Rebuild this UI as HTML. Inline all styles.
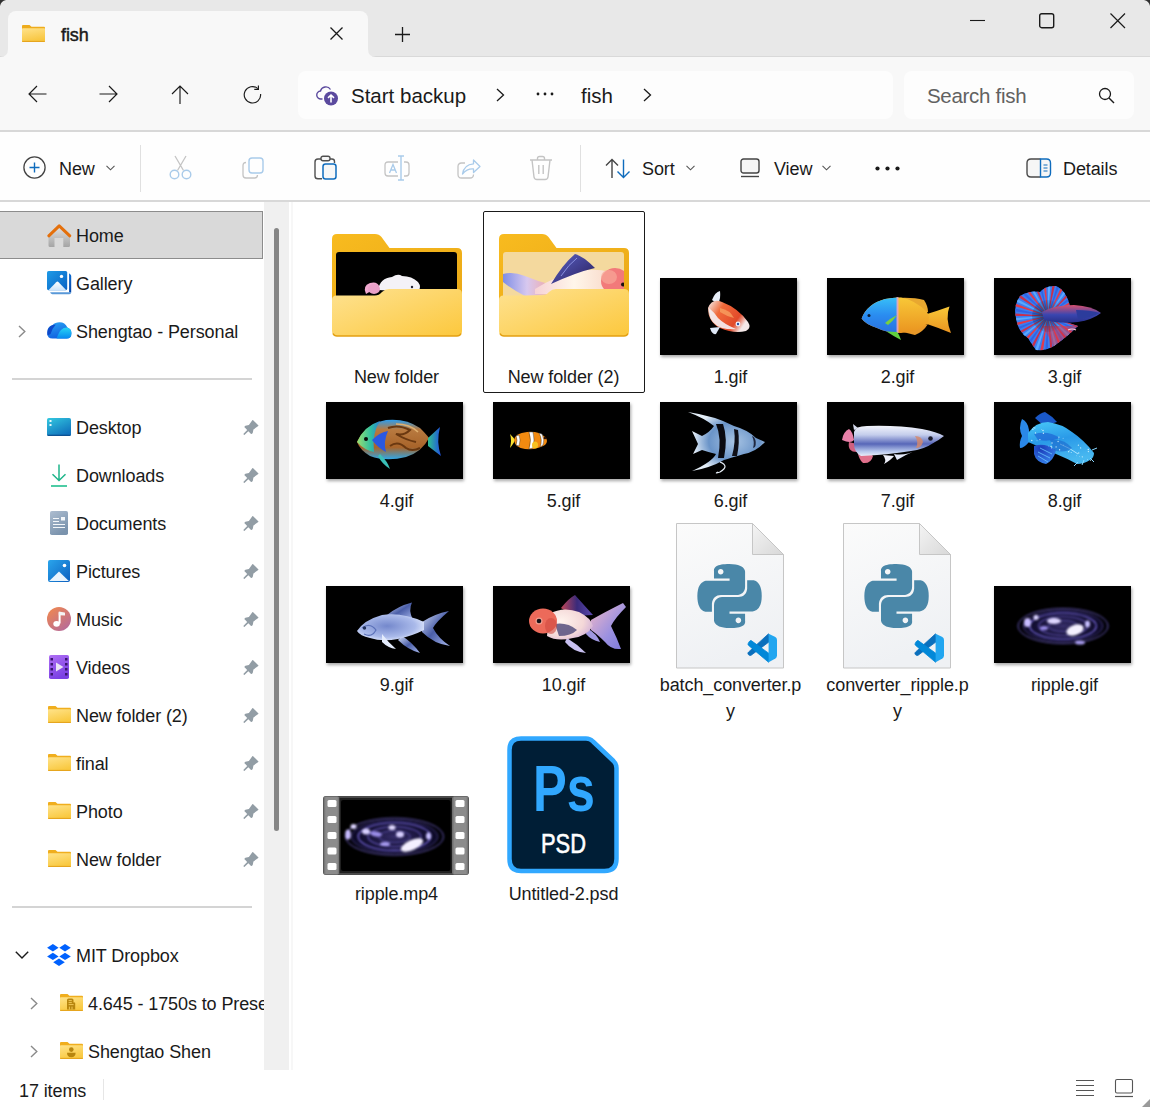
<!DOCTYPE html>
<html><head><meta charset="utf-8">
<style>
*{margin:0;padding:0;box-sizing:border-box}
html,body{width:1150px;height:1107px;overflow:hidden;background:#fff;font-family:"Liberation Sans",sans-serif;color:#1a1a1a}
.a{position:absolute}
.t{position:absolute;font-size:18px;letter-spacing:-0.1px;white-space:nowrap;line-height:22px;padding-top:1px}
svg{position:absolute;overflow:visible}
.lbl{position:absolute;font-size:18px;letter-spacing:-0.1px;white-space:nowrap;line-height:26px;text-align:center;width:160px;padding-top:1px}
</style></head><body>

<!-- title bar -->
<div class="a" style="left:0;top:0;width:1150px;height:57px;background:#e8e8e8"></div>
<div class="a" style="left:0;top:56px;width:1150px;height:1px;background:#d9d9d9"></div>
<!-- tab -->
<div class="a" style="left:8px;top:11px;width:360px;height:47px;background:#f8f8f8;border-radius:8px 8px 0 0"></div>
<svg style="left:0;top:49px" width="8" height="8"><path d="M0 8 Q8 8 8 0 L8 8Z" fill="#f8f8f8"/></svg>
<svg style="left:368px;top:49px" width="8" height="8"><path d="M8 8 Q0 8 0 0 L0 8Z" fill="#f8f8f8"/></svg>
<!-- window corners -->
<svg style="left:0;top:0" width="8" height="8"><path d="M0 0 H6 Q1 1 0 6Z" fill="#303030"/></svg>
<svg style="left:1142px;top:0" width="8" height="8"><path d="M8 0 H2 Q7 1 8 6Z" fill="#303030"/></svg>

<!-- tab folder icon -->
<svg style="left:22px;top:25px" width="23" height="17" viewBox="0 0 23 17"><defs><linearGradient id="tfg" x1="0" y1="0" x2="0.3" y2="1"><stop offset="0" stop-color="#ffe28a"/><stop offset="1" stop-color="#f8c640"/></linearGradient></defs><path d="M0 1 Q0 0 1 0 H7.5 L9.5 1.8 H22 Q23 1.8 23 2.8 V16 Q23 17 22 17 H1 Q0 17 0 16Z" fill="#eeac1c"/><path d="M0 4 Q0 3.3 0.8 3.3 H22.2 Q23 3.3 23 4 V16 Q23 17 22 17 H1 Q0 17 0 16Z" fill="url(#tfg)"/><path d="M0.3 16.4 H22.7" stroke="#e4a11a" stroke-width="1"/></svg>
<div class="t" style="left:61px;top:23px;font-size:18px;-webkit-text-stroke:0.45px #1a1a1a">fish</div>
<!-- tab close -->
<svg style="left:330px;top:27px" width="13" height="13"><path d="M0.5 0.5 L12.5 12.5 M12.5 0.5 L0.5 12.5" stroke="#1a1a1a" stroke-width="1.3"/></svg>
<!-- new tab plus -->
<svg style="left:395px;top:27px" width="15" height="15"><path d="M7.5 0 V15 M0 7.5 H15" stroke="#1a1a1a" stroke-width="1.3"/></svg>
<!-- window controls -->
<svg style="left:970px;top:19px" width="16" height="3"><path d="M0 1.5 H15" stroke="#1a1a1a" stroke-width="1.1"/></svg>
<svg style="left:1039px;top:13px" width="16" height="16"><rect x="0.7" y="0.7" width="14" height="14" rx="2" fill="none" stroke="#1a1a1a" stroke-width="1.4"/></svg>
<svg style="left:1110px;top:13px" width="16" height="16"><path d="M0.5 0.5 L15 15 M15 0.5 L0.5 15" stroke="#1a1a1a" stroke-width="1.2"/></svg>

<!-- nav bar -->
<div class="a" style="left:0;top:57px;width:1150px;height:73px;background:#f8f8f8"></div>
<div class="a" style="left:0;top:130px;width:1150px;height:2px;background:#d8d8d8"></div>
<!-- nav arrows -->
<svg style="left:28px;top:85px" width="19" height="18" viewBox="0 0 19 18"><path d="M18.5 9 H1 M9 1 L1 9 L9 17" fill="none" stroke="#1a1a1a" stroke-width="1.15"/></svg>
<svg style="left:99px;top:85px" width="19" height="18" viewBox="0 0 19 18"><path d="M0.5 9 H18 M10 1 L18 9 L10 17" fill="none" stroke="#1a1a1a" stroke-width="1.15"/></svg>
<svg style="left:171px;top:85px" width="18" height="19" viewBox="0 0 18 19"><path d="M9 19 V1 M1 9 L9 1 L17 9" fill="none" stroke="#1a1a1a" stroke-width="1.15"/></svg>
<svg style="left:243px;top:85px" width="20" height="20" viewBox="0 0 20 20"><path d="M17.6 9 A8.2 8.2 0 1 1 14.8 3.6" fill="none" stroke="#1a1a1a" stroke-width="1.15"/><path d="M15.4 0.5 V4.4 H11.3" fill="none" stroke="#1a1a1a" stroke-width="1.15"/></svg>

<!-- address box -->
<div class="a" style="left:298px;top:71px;width:595px;height:48px;background:#fdfdfd;border-radius:8px"></div>
<svg style="left:316px;top:85px" width="24" height="22" viewBox="0 0 24 22"><path d="M6.5 14 H5 A4 4 0 0 1 4.5 6 A5.5 5.5 0 0 1 14.5 4.5" fill="none" stroke="#5b4a9e" stroke-width="1.4"/><circle cx="15" cy="13.5" r="7" fill="#5b4a9e"/><path d="M15 17.5 V10 M12 12.8 L15 10 L18 12.8" fill="none" stroke="#fff" stroke-width="1.6"/></svg>
<div class="t" style="left:351px;top:84px;font-size:20.5px;letter-spacing:0">Start backup</div>
<svg style="left:496px;top:88px" width="9" height="14" viewBox="0 0 9 14"><path d="M1 1 L7.5 7 L1 13" fill="none" stroke="#1a1a1a" stroke-width="1.3"/></svg>
<svg style="left:536px;top:92px" width="18" height="4"><circle cx="2" cy="2" r="1.4" fill="#1a1a1a"/><circle cx="9" cy="2" r="1.4" fill="#1a1a1a"/><circle cx="16" cy="2" r="1.4" fill="#1a1a1a"/></svg>
<div class="t" style="left:581px;top:84px;font-size:20.5px;letter-spacing:0">fish</div>
<svg style="left:643px;top:88px" width="9" height="14" viewBox="0 0 9 14"><path d="M1 1 L7.5 7 L1 13" fill="none" stroke="#1a1a1a" stroke-width="1.3"/></svg>

<!-- search box -->
<div class="a" style="left:904px;top:71px;width:230px;height:48px;background:#fdfdfd;border-radius:8px"></div>
<div class="t" style="left:927px;top:84px;font-size:20.5px;letter-spacing:-0.3px;color:#616161">Search fish</div>
<svg style="left:1098px;top:87px" width="17" height="17" viewBox="0 0 17 17"><circle cx="7" cy="7" r="5.5" fill="none" stroke="#1a1a1a" stroke-width="1.3"/><path d="M11 11 L16 16" stroke="#1a1a1a" stroke-width="1.4"/></svg>

<!-- command bar -->
<div class="a" style="left:0;top:132px;width:1150px;height:68px;background:#fefefe"></div>
<div class="a" style="left:0;top:200px;width:1150px;height:2px;background:#d8d8d8"></div>


<!-- New button -->
<svg style="left:23px;top:156px" width="23" height="23" viewBox="0 0 23 23"><circle cx="11.5" cy="11.5" r="10.6" fill="none" stroke="#444" stroke-width="1.3"/><path d="M11.5 6.5 V16.5 M6.5 11.5 H16.5" stroke="#0f6cbd" stroke-width="1.4"/></svg>
<div class="t" style="left:59px;top:157px">New</div>
<svg style="left:106px;top:165px" width="9" height="6" viewBox="0 0 9 6"><path d="M0.5 0.8 L4.5 4.8 L8.5 0.8" fill="none" stroke="#555" stroke-width="1.1"/></svg>
<div class="a" style="left:140px;top:145px;width:1px;height:47px;background:#e0e0e0"></div>
<!-- cut -->
<svg style="left:169px;top:155px" width="23" height="25" viewBox="0 0 23 25"><path d="M6 1 L14.5 15.5 M17 1 L8.5 15.5" stroke="#c4c4c4" stroke-width="1.3" fill="none"/><circle cx="5.5" cy="19.5" r="4.3" fill="none" stroke="#a9cbea" stroke-width="1.4"/><circle cx="17.5" cy="19.5" r="4.3" fill="none" stroke="#a9cbea" stroke-width="1.4"/></svg>
<!-- copy -->
<svg style="left:242px;top:157px" width="22" height="22" viewBox="0 0 22 22"><path d="M4 5.5 Q1 5.5 1 8.5 V18 Q1 21 4 21 H12.5 Q15.5 21 15.5 18" fill="none" stroke="#c4c4c4" stroke-width="1.3"/><rect x="7" y="1" width="14" height="15" rx="3" fill="none" stroke="#a9cbea" stroke-width="1.4"/></svg>
<!-- paste -->
<svg style="left:313px;top:155px" width="24" height="26" viewBox="0 0 24 26"><path d="M9 4 H5 Q2 4 2 7 V21 Q2 23.8 5 23.8 H9" fill="none" stroke="#505050" stroke-width="1.4"/><path d="M16 4 H19 Q21.5 4 21.5 6.5 V8" fill="none" stroke="#505050" stroke-width="1.4"/><rect x="8" y="1.2" width="9" height="4.5" rx="2" fill="#f6f6f6" stroke="#505050" stroke-width="1.4"/><rect x="10" y="9" width="13" height="15" rx="2.5" fill="#f7f7f7" stroke="#0f6cbd" stroke-width="1.5"/></svg>
<!-- rename -->
<svg style="left:384px;top:155px" width="26" height="26" viewBox="0 0 26 26"><path d="M14 7 H4 Q1 7 1 10 V18 Q1 21 4 21 H14 M20 7 H22 Q25 7 25 10 V18 Q25 21 22 21 H20" fill="none" stroke="#c4c4c4" stroke-width="1.3"/><path d="M5.5 18 L9 9.5 L12.5 18 M6.8 15 H11.2" fill="none" stroke="#a9cbea" stroke-width="1.3"/><path d="M17 1 V25 M14 1 H20 M14 25 H20" fill="none" stroke="#a9cbea" stroke-width="1.4"/></svg>
<!-- share -->
<svg style="left:457px;top:159px" width="24" height="20" viewBox="0 0 24 20"><path d="M8 4 H4.5 Q1 4 1 7.5 V15.5 Q1 19 4.5 19 H13 Q16.5 19 16.5 15.5" fill="none" stroke="#c4c4c4" stroke-width="1.3"/><path d="M16.5 1 L23 7.5 L16.5 13.5 V10 Q10 9.5 5.5 15 Q7 5.5 16.5 4.8Z" fill="none" stroke="#a9cbea" stroke-width="1.3" stroke-linejoin="round"/></svg>
<!-- delete -->
<svg style="left:529px;top:155px" width="24" height="26" viewBox="0 0 24 26"><path d="M1 5 H23 M8.5 5 V3.5 Q8.5 1.5 10.5 1.5 H13.5 Q15.5 1.5 15.5 3.5 V5 M3 5 L5 22 Q5.3 24.5 8 24.5 H16 Q18.7 24.5 19 22 L21 5 M9.8 10 V19 M14.2 10 V19" fill="none" stroke="#c4c4c4" stroke-width="1.4"/></svg>
<div class="a" style="left:580px;top:145px;width:1px;height:47px;background:#e0e0e0"></div>
<!-- sort -->
<svg style="left:605px;top:158px" width="26" height="21" viewBox="0 0 26 21"><path d="M7 20 V1.5 M1 7.5 L7 1.5 L13 7.5" fill="none" stroke="#444" stroke-width="1.4"/><path d="M18.5 1.5 V19.5 M12.5 13.5 L18.5 19.5 L24.5 13.5" fill="none" stroke="#0f6cbd" stroke-width="1.4"/></svg>
<div class="t" style="left:642px;top:157px">Sort</div>
<svg style="left:686px;top:165px" width="9" height="6" viewBox="0 0 9 6"><path d="M0.5 0.8 L4.5 4.8 L8.5 0.8" fill="none" stroke="#555" stroke-width="1.1"/></svg>
<!-- view -->
<svg style="left:740px;top:158px" width="20" height="20" viewBox="0 0 20 20"><rect x="1" y="1" width="18" height="14" rx="2.5" fill="#f6f6f6" stroke="#444" stroke-width="1.4"/><path d="M1 18.5 H19" stroke="#444" stroke-width="1.4"/></svg>
<div class="t" style="left:774px;top:157px">View</div>
<svg style="left:822px;top:165px" width="9" height="6" viewBox="0 0 9 6"><path d="M0.5 0.8 L4.5 4.8 L8.5 0.8" fill="none" stroke="#555" stroke-width="1.1"/></svg>
<svg style="left:875px;top:166px" width="25" height="5"><circle cx="2.5" cy="2.5" r="2.1" fill="#1a1a1a"/><circle cx="12.5" cy="2.5" r="2.1" fill="#1a1a1a"/><circle cx="22.5" cy="2.5" r="2.1" fill="#1a1a1a"/></svg>
<!-- details -->
<svg style="left:1026px;top:158px" width="26" height="20" viewBox="0 0 26 20"><path d="M14.5 1 H5 Q1 1 1 5 V15 Q1 19 5 19 H14.5" fill="#f6f6f6" stroke="#4a4a4a" stroke-width="1.4"/><path d="M14.5 1 H20.5 Q24.5 1 24.5 5 V15 Q24.5 19 20.5 19 H14.5Z" fill="#f6f6f6" stroke="#0f6cbd" stroke-width="1.4"/><path d="M17.5 7 H21.5 M17.5 10 H21.5 M17.5 13 H21.5" stroke="#0f6cbd" stroke-width="1.2"/></svg>
<div class="t" style="left:1063px;top:157px">Details</div>

<!-- content -->
<div class="a" style="left:483px;top:211px;width:162px;height:182px;border:1px solid #1a1a1a;border-radius:2px"></div>
<svg style="left:332px;top:234px" width="130" height="103" viewBox="0 0 130 103"><defs><linearGradient id="fb1" x1="0" y1="0" x2="1" y2="1"><stop offset="0" stop-color="#f8bb1f"/><stop offset="1" stop-color="#eaa816"/></linearGradient><linearGradient id="ff1" x1="0" y1="0" x2="1" y2="1"><stop offset="0" stop-color="#fee291"/><stop offset="1" stop-color="#fcc83d"/></linearGradient><clipPath id="fc1"><rect x="4" y="18" width="121" height="60" rx="3"/></clipPath></defs>
<path d="M0 5 Q0 0 5 0 H43 Q47 0 49.5 3 L57.5 14 H125 Q130 14 130 19 V70 H0Z" fill="url(#fb1)"/>
<g clip-path="url(#fc1)"><rect x="0" y="0" width="130" height="103" fill="#000"/><g transform="translate(0,0)"><path d="M34 60 Q30 52 38 49 Q45 47 47 52 Z" fill="#f0a8cf"/><path d="M46 56 Q48 44 60 43 Q66 39 70 42 Q80 42 86 48 Q90 53 86 58 Z" fill="#f4f2f7"/><ellipse cx="42" cy="55" rx="6" ry="5" fill="#e9a0c8"/><circle cx="80" cy="53" r="1.2" fill="#223"/></g></g>
<path d="M0 66 Q0 61.5 4.5 61.5 H43 Q47 61.5 50 58 Q53 55 57 55 H125 Q130 55 130 60 V97 Q130 102 125 102 H5 Q0 102 0 97Z" fill="url(#ff1)"/>
<path d="M1 99.5 Q2 102 5 102 H125 Q128 102 129 99.5" fill="none" stroke="#e3a012" stroke-width="1.5"/></svg>
<svg style="left:499px;top:234px" width="130" height="103" viewBox="0 0 130 103"><defs><linearGradient id="fb2" x1="0" y1="0" x2="1" y2="1"><stop offset="0" stop-color="#f8bb1f"/><stop offset="1" stop-color="#eaa816"/></linearGradient><linearGradient id="ff2" x1="0" y1="0" x2="1" y2="1"><stop offset="0" stop-color="#fee291"/><stop offset="1" stop-color="#fcc83d"/></linearGradient><clipPath id="fc2"><rect x="4" y="18" width="121" height="60" rx="3"/></clipPath></defs>
<path d="M0 5 Q0 0 5 0 H43 Q47 0 49.5 3 L57.5 14 H125 Q130 14 130 19 V70 H0Z" fill="url(#fb2)"/>
<g clip-path="url(#fc2)"><rect x="0" y="0" width="130" height="103" fill="#f4d99e"/><defs><linearGradient id="tl2" x1="0" y1="0" x2="1" y2="0"><stop offset="0" stop-color="#7f8ee6"/><stop offset="0.5" stop-color="#d7c8ef"/><stop offset="1" stop-color="#f1a8a8"/></linearGradient><linearGradient id="bd2" x1="0" y1="0" x2="1" y2="0"><stop offset="0" stop-color="#f6d2d6"/><stop offset="0.5" stop-color="#fff6ea"/><stop offset="1" stop-color="#f8d8c8"/></linearGradient><linearGradient id="df2" x1="0" y1="0" x2="1" y2="1"><stop offset="0" stop-color="#5a62c8"/><stop offset="1" stop-color="#2a1f5a"/></linearGradient></defs>
<path d="M4 40 Q14 37 26 42 Q38 47 50 50 L52 60 L26 62 Q14 56 4 48Z" fill="url(#tl2)"/>
<path d="M36 55 Q56 42 80 37 Q98 34 110 38 L114 60 L36 60Z" fill="url(#bd2)"/>
<path d="M52 50 Q64 30 76 20 Q84 22 96 34 Q78 38 52 50Z" fill="url(#df2)"/>
<path d="M62 42 Q70 30 78 24" stroke="#8a90e0" stroke-width="1" fill="none"/>
<ellipse cx="116" cy="47" rx="14" ry="13" fill="#f27a7a"/><ellipse cx="110" cy="43" rx="8" ry="7" fill="#f8a898" opacity="0.7"/>
<circle cx="124" cy="50.5" r="2" fill="#1a1010"/></g>
<path d="M0 66 Q0 61.5 4.5 61.5 H43 Q47 61.5 50 58 Q53 55 57 55 H125 Q130 55 130 60 V97 Q130 102 125 102 H5 Q0 102 0 97Z" fill="url(#ff2)"/>
<path d="M1 99.5 Q2 102 5 102 H125 Q128 102 129 99.5" fill="none" stroke="#e3a012" stroke-width="1.5"/></svg>
<div class="lbl" style="left:316.5px;top:363px">New folder</div>
<div class="lbl" style="left:483.5px;top:363px">New folder (2)</div>
<div class="a" style="left:660px;top:278px;width:137px;height:77px;background:#000;box-shadow:1px 2px 3px rgba(0,0,0,0.35)"><svg style="left:0;top:0" width="137" height="77" viewBox="0 0 137 77"><defs><linearGradient id="k1" x1="0" y1="0" x2="1" y2="0.5"><stop offset="0" stop-color="#f4f0f0"/><stop offset="0.35" stop-color="#f06a3a"/><stop offset="0.8" stop-color="#e24a2a"/><stop offset="1" stop-color="#f5e8e8"/></linearGradient></defs>
<path d="M52 22 Q55 14 60 13 Q61 20 58 26Z" fill="#e8eef8"/>
<path d="M48 30 Q52 20 62 24 Q78 30 88 44 Q92 50 86 53 Q74 56 60 50 Q48 44 48 30Z" fill="url(#k1)"/>
<path d="M50 50 L60 49 L56 56 Q52 57 50 50Z" fill="#dfe8f6"/><path d="M49 34 Q50 46 62 50 Q70 52 76 51 Q64 46 58 40 Q54 34 49 30Z" fill="#f4f0f4" opacity="0.9"/><path d="M60 30 Q70 32 74 40 Q66 38 60 34Z" fill="#f8a060" opacity="0.8"/>
<circle cx="78" cy="46" r="2.4" fill="#f0f4ff"/><circle cx="78" cy="46" r="1.2" fill="#3050a0"/></svg></div>
<div class="a" style="left:827px;top:278px;width:137px;height:77px;background:#000;box-shadow:1px 2px 3px rgba(0,0,0,0.35)"><svg style="left:0;top:0" width="137" height="77" viewBox="0 0 137 77"><defs><linearGradient id="g2b" x1="0" y1="0" x2="0" y2="1"><stop offset="0" stop-color="#38c0f8"/><stop offset="0.5" stop-color="#2a8cf0"/><stop offset="1" stop-color="#2a70e0"/></linearGradient><linearGradient id="g2y" x1="0" y1="0" x2="0" y2="1"><stop offset="0" stop-color="#f8c838"/><stop offset="1" stop-color="#ea9420"/></linearGradient><clipPath id="c2b"><rect x="0" y="0" width="70.5" height="77"/></clipPath></defs>
<path d="M70 20 Q86 19 97 22 Q101 28 101 34 L88 36Z" fill="#e8a830"/>
<path d="M100 36 Q110 33 122.5 28.5 Q118 40 124 55 Q112 50 100 46Z" fill="url(#g2y)"/>
<path d="M76 48 Q90 50 101 46 Q96 54 88 57 L76 54Z" fill="#e89828"/>
<path d="M34.6 40.5 Q40 26 58 21 Q68 19 74 19.5 Q88 22 100 34 Q104 40 100 46 Q90 54 74 55 Q60 55 50 50 Q38 46 34.6 40.5Z" fill="url(#g2y)"/>
<path d="M34.6 40.5 Q40 26 58 21 Q68 19 74 19.5 Q88 22 100 34 Q104 40 100 46 Q90 54 74 55 Q60 55 50 50 Q38 46 34.6 40.5Z" fill="url(#g2b)" clip-path="url(#c2b)"/>
<rect x="69.5" y="19" width="2" height="36" fill="#f0a8c8" opacity="0.8"/>
<path d="M58 45 Q64 40 70 37 Q66 43 61 47Z" fill="#7ad040"/>
<path d="M59.5 53.6 Q66 58 74 62 Q72 56 70 54Z" fill="#60d040"/>
<circle cx="42" cy="37.5" r="1.5" fill="#0a1a30"/></svg></div>
<div class="a" style="left:994px;top:278px;width:137px;height:77px;background:#000;box-shadow:1px 2px 3px rgba(0,0,0,0.35)"><svg style="left:0;top:0" width="137" height="77" viewBox="0 0 137 77"><defs><clipPath id="bf"><path d="M76 28 Q72 12 62 8 Q52 7 46 14 Q36 12 26 18 Q19 28 22 40 Q24 54 34 60 Q39 68 42 72 Q52 73 60 68 Q74 58 84 48 L60 40Z"/></clipPath><linearGradient id="bb3" x1="0" y1="0" x2="0" y2="1"><stop offset="0" stop-color="#d8506e"/><stop offset="0.55" stop-color="#3a46b0"/><stop offset="1" stop-color="#28308a"/></linearGradient><radialGradient id="bt3" cx="0.4" cy="0.5" r="0.6"><stop offset="0" stop-color="#000" stop-opacity="0.5"/><stop offset="1" stop-color="#000" stop-opacity="0"/></radialGradient></defs><g clip-path="url(#bf)"><rect x="0" y="0" width="137" height="77" fill="#3c7ef0"/><path d="M54 38 L114.0 38.0 L113.8 42.7Z" fill="#e23a4c"/><path d="M54 38 L113.4 46.5 L112.5 51.2Z" fill="#5aa8ff"/><path d="M54 38 L111.6 54.9 L110.1 59.4Z" fill="#c8304e"/><path d="M54 38 L108.6 62.9 L106.5 67.1Z" fill="#3064e6"/><path d="M54 38 L104.5 70.4 L101.8 74.3Z" fill="#e23a4c"/><path d="M54 38 L99.3 77.3 L96.1 80.7Z" fill="#5aa8ff"/><path d="M54 38 L93.3 83.3 L89.6 86.3Z" fill="#c8304e"/><path d="M54 38 L86.4 88.5 L82.4 90.9Z" fill="#3064e6"/><path d="M54 38 L78.9 92.6 L74.6 94.4Z" fill="#e23a4c"/><path d="M54 38 L70.9 95.6 L66.3 96.7Z" fill="#5aa8ff"/><path d="M54 38 L62.5 97.4 L57.9 97.9Z" fill="#c8304e"/><path d="M54 38 L54.0 98.0 L49.3 97.8Z" fill="#3064e6"/><path d="M54 38 L45.5 97.4 L40.8 96.5Z" fill="#e23a4c"/><path d="M54 38 L37.1 95.6 L32.6 94.1Z" fill="#5aa8ff"/><path d="M54 38 L29.1 92.6 L24.9 90.5Z" fill="#c8304e"/><path d="M54 38 L21.6 88.5 L17.7 85.8Z" fill="#3064e6"/><path d="M54 38 L14.7 83.3 L11.3 80.1Z" fill="#e23a4c"/><path d="M54 38 L8.7 77.3 L5.7 73.6Z" fill="#5aa8ff"/><path d="M54 38 L3.5 70.4 L1.1 66.4Z" fill="#c8304e"/><path d="M54 38 L-0.6 62.9 L-2.4 58.6Z" fill="#3064e6"/><path d="M54 38 L-3.6 54.9 L-4.7 50.3Z" fill="#e23a4c"/><path d="M54 38 L-5.4 46.5 L-5.9 41.9Z" fill="#5aa8ff"/><path d="M54 38 L-6.0 38.0 L-5.8 33.3Z" fill="#c8304e"/><path d="M54 38 L-5.4 29.5 L-4.5 24.8Z" fill="#3064e6"/><path d="M54 38 L-3.6 21.1 L-2.1 16.6Z" fill="#e23a4c"/><path d="M54 38 L-0.6 13.1 L1.5 8.9Z" fill="#5aa8ff"/><path d="M54 38 L3.5 5.6 L6.2 1.7Z" fill="#c8304e"/><path d="M54 38 L8.7 -1.3 L11.9 -4.7Z" fill="#3064e6"/><path d="M54 38 L14.7 -7.3 L18.4 -10.3Z" fill="#e23a4c"/><path d="M54 38 L21.6 -12.5 L25.6 -14.9Z" fill="#5aa8ff"/><path d="M54 38 L29.1 -16.6 L33.4 -18.4Z" fill="#c8304e"/><path d="M54 38 L37.1 -19.6 L41.7 -20.7Z" fill="#3064e6"/><path d="M54 38 L45.5 -21.4 L50.1 -21.9Z" fill="#e23a4c"/><path d="M54 38 L54.0 -22.0 L58.7 -21.8Z" fill="#5aa8ff"/><path d="M54 38 L62.5 -21.4 L67.2 -20.5Z" fill="#c8304e"/><path d="M54 38 L70.9 -19.6 L75.4 -18.1Z" fill="#3064e6"/><path d="M54 38 L78.9 -16.6 L83.1 -14.5Z" fill="#e23a4c"/><path d="M54 38 L86.4 -12.5 L90.3 -9.8Z" fill="#5aa8ff"/><path d="M54 38 L93.3 -7.3 L96.7 -4.1Z" fill="#c8304e"/><path d="M54 38 L99.3 -1.3 L102.3 2.4Z" fill="#3064e6"/><path d="M54 38 L104.5 5.6 L106.9 9.6Z" fill="#e23a4c"/><path d="M54 38 L108.6 13.1 L110.4 17.4Z" fill="#5aa8ff"/><path d="M54 38 L111.6 21.1 L112.7 25.7Z" fill="#c8304e"/><path d="M54 38 L113.4 29.5 L113.9 34.1Z" fill="#3064e6"/><path d="M48 48 Q56 60 60 70 Q72 60 84 48Z" fill="#d8344a" opacity="0.55"/><circle cx="54" cy="38" r="16" fill="url(#bt3)"/></g><path d="M48 34 Q60 27 80 27 Q98 28 107 35 Q98 42 84 44 Q66 46 50 42Z" fill="url(#bb3)"/><path d="M82 32 Q96 32 106 35 Q96 40 84 41Z" fill="#2c3c9c"/><path d="M74 52 Q78 50 82 52" stroke="#ffd0d8" stroke-width="1.2" fill="none"/></svg></div>
<div class="a" style="left:326px;top:402px;width:137px;height:77px;background:#000;box-shadow:1px 2px 3px rgba(0,0,0,0.35)"><svg style="left:0;top:0" width="137" height="77" viewBox="0 0 137 77"><defs><linearGradient id="g4b" x1="0" y1="0" x2="0" y2="1"><stop offset="0" stop-color="#2a9ef0"/><stop offset="0.25" stop-color="#b87a40"/><stop offset="0.7" stop-color="#a8642a"/><stop offset="1" stop-color="#30a8e8"/></linearGradient><linearGradient id="g4f" x1="0" y1="0" x2="1" y2="0"><stop offset="0" stop-color="#9ae070"/><stop offset="0.6" stop-color="#30c0a0"/><stop offset="1" stop-color="#2a80d8"/></linearGradient><linearGradient id="g4t" x1="0" y1="0" x2="1" y2="0"><stop offset="0" stop-color="#30c090"/><stop offset="1" stop-color="#2050e0"/></linearGradient></defs>
<path d="M31 40 Q40 22 60 18 Q80 16 94 26 Q100 32 103 36 Q96 50 80 55 Q60 60 44 54 Q34 48 31 40Z" fill="url(#g4b)"/>
<path d="M102 36 L114 25 Q110 40 115 54 L102 44Z" fill="url(#g4t)"/>
<path d="M31 40 Q38 24 54 19 Q46 30 48 50 Q38 48 31 40Z" fill="url(#g4f)"/>
<path d="M46 38 Q54 30 62 29 Q57 40 60 50 Q52 46 46 38Z" fill="#2a58e0"/>
<path d="M54 52 Q62 60 64 67 Q56 62 52 54Z" fill="#3ac0b8"/>
<path d="M62 26 Q72 22 84 28 Q78 34 70 32 Q80 38 90 40 M64 44 Q72 38 80 46 Q86 50 94 46" fill="none" stroke="#6a3810" stroke-width="2"/>
<path d="M70 22 Q84 22 92 30" fill="none" stroke="#e0b070" stroke-width="1.5"/>
<circle cx="40" cy="37" r="2" fill="#0a0a0a"/></svg></div>
<div class="a" style="left:493px;top:402px;width:137px;height:77px;background:#000;box-shadow:1px 2px 3px rgba(0,0,0,0.35)"><svg style="left:0;top:0" width="137" height="77" viewBox="0 0 137 77"><path d="M17 32 Q21 36 22 38 Q21 41 17 46 Q19 38 17 32Z" fill="#f8e030"/>
<path d="M21 38 Q22 31 34 30 Q46 29 52 35 Q56 39 52 43 Q44 48 32 47 Q22 46 21 38Z" fill="#f28a10"/>
<path d="M23 34 Q25 38 23 43 L26 44 Q28 38 26 33Z" fill="#fff" stroke="#222" stroke-width="0.4"/>
<path d="M36 30 Q39 38 36 47 L40 46 Q42 38 40 30Z" fill="#fff" stroke="#222" stroke-width="0.4"/>
<path d="M46 31 Q50 38 47 45 L50 43 Q52 38 49 32Z" fill="#fff" stroke="#222" stroke-width="0.4"/>
<ellipse cx="42" cy="43" rx="3" ry="3.5" fill="#f8c020"/>
<circle cx="52" cy="36" r="1.3" fill="#301000"/></svg></div>
<div class="a" style="left:660px;top:402px;width:137px;height:77px;background:#000;box-shadow:1px 2px 3px rgba(0,0,0,0.35)"><svg style="left:0;top:0" width="137" height="77" viewBox="0 0 137 77"><defs><radialGradient id="g6" cx="0.6" cy="0.5" r="0.55"><stop offset="0" stop-color="#a8c4e4"/><stop offset="0.6" stop-color="#6a94c8"/><stop offset="1" stop-color="#e4eef8"/></radialGradient></defs>
<path d="M28 10 Q55 14 74 24 Q88 28 96 36 L105 40 Q96 50 84 52 Q70 56 64 58 Q50 66 32 69 Q52 60 56 52 Q48 50 42 48 L33 52 L38 42 L32 29 L42 34 Q50 30 54 24 Q44 16 28 10Z" fill="url(#g6)"/>
<path d="M56 22 Q62 36 58 56 L64 56 Q68 36 63 22Z" fill="#0a0a10"/>
<path d="M74 27 Q76 40 72 54 L77 54 Q80 40 78 28Z" fill="#101018"/>
<path d="M92 34 Q95 40 93 46 L95 45 Q97 40 94 35Z" fill="#202840"/>
<path d="M60 60 Q70 64 60 70 Q54 72 58 70" fill="none" stroke="#e8f0f8" stroke-width="1.2"/></svg></div>
<div class="a" style="left:827px;top:402px;width:137px;height:77px;background:#000;box-shadow:1px 2px 3px rgba(0,0,0,0.35)"><svg style="left:0;top:0" width="137" height="77" viewBox="0 0 137 77"><defs><linearGradient id="ar7" x1="0" y1="0" x2="0" y2="1"><stop offset="0" stop-color="#f2f4fb"/><stop offset="0.3" stop-color="#c4cdec"/><stop offset="0.6" stop-color="#5766b8"/><stop offset="0.85" stop-color="#b8c8ec"/><stop offset="1" stop-color="#e8eefa"/></linearGradient></defs>
<path d="M15 38 Q16 30 22 27 Q26 30 27 38 Q24 42 15 38Z" fill="#e880a8"/>
<path d="M22 40 Q20 50 30 50 L30 42Z" fill="#d06080"/>
<path d="M30 48 Q32 58 36 61 Q44 62 46 54 L40 48Z" fill="#e0708c"/>
<path d="M26 22 L31 26 L27 28Z" fill="#d8ddf0"/>
<path d="M27 30 Q28 24 40 24 Q70 23 95 27 Q110 30 117 34 Q112 38 108 40 Q96 48 84 49 Q60 53 34 54 Q27 50 27 42Z" fill="url(#ar7)"/>
<path d="M88 34 Q92 40 89 46 Q94 46 96 40 Q95 34 88 34Z" fill="#d88868" opacity="0.8"/>
<path d="M56 53 Q60 58 57 62 Q64 58 67 54Z" fill="#eef0fa"/>
<path d="M67 52 Q78 54 90 48 Q80 52 70 58Z" fill="#e2e8f8"/>
<circle cx="103.5" cy="36.5" r="2.3" fill="#1a1a2a"/></svg></div>
<div class="a" style="left:994px;top:402px;width:137px;height:77px;background:#000;box-shadow:1px 2px 3px rgba(0,0,0,0.35)"><svg style="left:0;top:0" width="137" height="77" viewBox="0 0 137 77"><defs><linearGradient id="g8" x1="0" y1="0" x2="0.3" y2="1"><stop offset="0" stop-color="#48c8f8"/><stop offset="0.5" stop-color="#2a9ae8"/><stop offset="1" stop-color="#48b8f0"/></linearGradient><radialGradient id="g8p" cx="0.3" cy="0.2" r="0.9"><stop offset="0" stop-color="#1a3ab8"/><stop offset="1" stop-color="#3a88f0"/></radialGradient></defs>
<path d="M28 17 Q34 20 35 28 L35 40 Q30 46 26 46 Q25 40 28 34 Q24 26 28 17Z" fill="#2a88e8"/>
<path d="M41 16 Q46 11 51 10 Q58 14 63 20 L50 24Z" fill="#1a58c8"/>
<path d="M34 31 Q42 20 54 20 Q68 22 78 30 Q90 38 100 51 Q100 56 96 58 Q90 62 83 62 Q72 56 62 52 Q48 46 34 40Z" fill="url(#g8)"/>
<path d="M40 32 Q54 28 66 36 Q56 40 44 38Z" fill="#1a5ad0" opacity="0.6"/>
<path d="M40 44 Q50 40 62 48 Q60 58 52 62 Q42 60 40 52Z" fill="url(#g8p)"/>
<path d="M44 50 L56 56 M44 54 L54 60 M46 46 L58 52" stroke="#6ac8ff" stroke-width="0.8"/>
<path d="M84 60 L80 64 M90 58 L88 63 M96 56 L100 60 M98 48 L103 46" stroke="#8ad8ff" stroke-width="1"/>
<path d="M66 42 Q76 46 84 52" stroke="#a8e4ff" stroke-width="1" fill="none"/><path d="M56 38 Q70 36 78 46 Q70 52 60 48Z" fill="#1a60c8" opacity="0.55"/><circle cx="74.6" cy="49.7" r="0.67" fill="#d8f6ff" opacity="0.9"/><circle cx="94.4" cy="49.6" r="0.72" fill="#d8f6ff" opacity="0.9"/><circle cx="37.8" cy="38.6" r="0.73" fill="#d8f6ff" opacity="0.9"/><circle cx="43.0" cy="38.8" r="0.45" fill="#d8f6ff" opacity="0.9"/><circle cx="69.7" cy="43.0" r="0.36" fill="#d8f6ff" opacity="0.9"/><circle cx="49.4" cy="31.2" r="0.72" fill="#d8f6ff" opacity="0.9"/><circle cx="49.0" cy="28.6" r="0.74" fill="#d8f6ff" opacity="0.9"/><circle cx="94.3" cy="47.6" r="0.74" fill="#d8f6ff" opacity="0.9"/><circle cx="54.7" cy="44.1" r="0.35" fill="#d8f6ff" opacity="0.9"/><circle cx="65.8" cy="48.2" r="0.37" fill="#d8f6ff" opacity="0.9"/><circle cx="82.5" cy="53.8" r="0.36" fill="#d8f6ff" opacity="0.9"/><circle cx="38.9" cy="27.2" r="0.73" fill="#d8f6ff" opacity="0.9"/><circle cx="93.6" cy="57.7" r="0.49" fill="#d8f6ff" opacity="0.9"/><circle cx="58.0" cy="41.0" r="0.66" fill="#d8f6ff" opacity="0.9"/><circle cx="85.4" cy="54.4" r="0.36" fill="#d8f6ff" opacity="0.9"/><circle cx="57.1" cy="44.4" r="0.72" fill="#d8f6ff" opacity="0.9"/><circle cx="40.8" cy="26.0" r="0.63" fill="#d8f6ff" opacity="0.9"/><circle cx="69.1" cy="36.2" r="0.44" fill="#d8f6ff" opacity="0.9"/><circle cx="64.3" cy="36.9" r="0.37" fill="#d8f6ff" opacity="0.9"/><circle cx="64.1" cy="39.5" r="0.64" fill="#d8f6ff" opacity="0.9"/><circle cx="41.5" cy="30.9" r="0.66" fill="#d8f6ff" opacity="0.9"/><circle cx="84.7" cy="51.0" r="0.63" fill="#d8f6ff" opacity="0.9"/><circle cx="77.2" cy="50.4" r="0.50" fill="#d8f6ff" opacity="0.9"/><circle cx="86.6" cy="45.9" r="0.67" fill="#d8f6ff" opacity="0.9"/><circle cx="57.6" cy="45.8" r="0.65" fill="#d8f6ff" opacity="0.9"/><circle cx="88.3" cy="54.8" r="0.63" fill="#d8f6ff" opacity="0.9"/><circle cx="96.5" cy="58.3" r="0.56" fill="#d8f6ff" opacity="0.9"/><circle cx="65.6" cy="47.7" r="0.64" fill="#d8f6ff" opacity="0.9"/><circle cx="84.4" cy="43.2" r="0.62" fill="#d8f6ff" opacity="0.9"/><circle cx="62.1" cy="44.9" r="0.66" fill="#d8f6ff" opacity="0.9"/><circle cx="75.5" cy="48.8" r="0.36" fill="#d8f6ff" opacity="0.9"/><circle cx="45.9" cy="37.6" r="0.61" fill="#d8f6ff" opacity="0.9"/><circle cx="39.4" cy="25.3" r="0.48" fill="#d8f6ff" opacity="0.9"/><circle cx="47.3" cy="27.7" r="0.36" fill="#d8f6ff" opacity="0.9"/><circle cx="64.9" cy="35.2" r="0.59" fill="#d8f6ff" opacity="0.9"/></svg></div>
<div class="a" style="left:326px;top:586px;width:137px;height:77px;background:#000;box-shadow:1px 2px 3px rgba(0,0,0,0.35)"><svg style="left:0;top:0" width="137" height="77" viewBox="0 0 137 77"><defs><radialGradient id="g9b" cx="0.45" cy="0.45" r="0.6"><stop offset="0" stop-color="#7488cc"/><stop offset="0.7" stop-color="#aabaea"/><stop offset="1" stop-color="#e0e8fc"/></radialGradient><linearGradient id="g9f" x1="0" y1="0" x2="1" y2="1"><stop offset="0" stop-color="#d8e2fa"/><stop offset="0.5" stop-color="#4a5ea8"/><stop offset="1" stop-color="#a8b8ec"/></linearGradient></defs>
<path d="M61 29 Q72 20 86 16.5 Q82 24 87 34Z" fill="url(#g9f)"/>
<path d="M96 36 Q108 28 123 25 Q110 36 107 42 Q112 52 124 60 Q108 58 96 46Z" fill="url(#g9f)"/>
<path d="M76 50 Q86 56 94 67 Q82 64 72 54Z" fill="url(#g9f)"/>
<path d="M31 45 Q38 34 56 29 Q76 26 98 36 L98 44 Q86 50 72 53 Q56 56 44 52 Q34 50 31 45Z" fill="url(#g9b)"/>
<path d="M56 48 Q62 56 70 63 Q62 62 56 56Z" fill="#e4ecfc"/>
<path d="M36 42 Q44 36 50 44 Q46 52 38 48" fill="none" stroke="#5a70b8" stroke-width="1.2"/>
<circle cx="38.5" cy="42" r="1.7" fill="#20305a"/></svg></div>
<div class="a" style="left:493px;top:586px;width:137px;height:77px;background:#000;box-shadow:1px 2px 3px rgba(0,0,0,0.35)"><svg style="left:0;top:0" width="137" height="77" viewBox="0 0 137 77"><defs><linearGradient id="gt10" x1="0" y1="0" x2="1" y2="1"><stop offset="0" stop-color="#f0b8c8"/><stop offset="0.6" stop-color="#9a90e0"/><stop offset="1" stop-color="#7c78d8"/></linearGradient><linearGradient id="gd10" x1="0" y1="0" x2="1" y2="0"><stop offset="0" stop-color="#c04858"/><stop offset="0.5" stop-color="#3a2a7a"/><stop offset="1" stop-color="#5a4ab0"/></linearGradient><radialGradient id="gb10" cx="0.3" cy="0.4" r="0.7"><stop offset="0" stop-color="#fff4ee"/><stop offset="0.7" stop-color="#f4d8d8"/><stop offset="1" stop-color="#d8b8d8"/></radialGradient></defs>
<path d="M68 22 Q76 12 82 9 Q90 18 100 29 L80 30Z" fill="url(#gd10)"/>
<path d="M98 34 Q112 26 130 17 L133 21 Q122 32 118 40 Q124 52 128 63 Q118 64 112 56 Q104 48 98 44Z" fill="url(#gt10)"/>
<path d="M94 42 Q104 48 107 56 Q98 54 93 48Z" fill="#a098e0"/>
<path d="M74 52 Q84 58 93 67 Q80 66 72 56Z" fill="#c8c0f0"/>
<path d="M56 28 Q70 20 86 26 Q98 32 100 40 Q94 50 80 52 Q64 56 54 50Z" fill="url(#gb10)"/>
<path d="M62 38 Q74 36 84 44 Q78 50 66 50Z" fill="#56507e" opacity="0.85"/>
<ellipse cx="50" cy="35" rx="14" ry="12.5" fill="#ec6a5a"/>
<ellipse cx="58" cy="40" rx="6" ry="8" fill="#d04a40" opacity="0.6"/>
<circle cx="46" cy="35" r="3.5" fill="#f2a090"/><circle cx="46" cy="35" r="2.3" fill="#151018"/></svg></div>
<div class="a" style="left:994px;top:586px;width:137px;height:77px;background:#000;box-shadow:1px 2px 3px rgba(0,0,0,0.35)"><svg style="left:0;top:0" width="137" height="77" viewBox="0 0 137 77"><defs><radialGradient id="rgr1" cx="0.5" cy="0.5" r="0.5"><stop offset="0" stop-color="#6a5ad0" stop-opacity="0.5"/><stop offset="0.8" stop-color="#2a2080" stop-opacity="0.3"/><stop offset="1" stop-color="#000" stop-opacity="0"/></radialGradient><filter id="blr1" x="-20%" y="-40%" width="140%" height="180%"><feGaussianBlur stdDeviation="1.1"/></filter></defs><ellipse cx="69" cy="40" rx="46.8" ry="18.4" fill="url(#rgr1)"/><g filter="url(#blr1)"><ellipse cx="69" cy="40" rx="45.0" ry="17.5" fill="none" stroke="#7a6ae0" stroke-opacity="0.8" stroke-width="1.0"/><ellipse cx="69" cy="40" rx="39.6" ry="15.4" fill="none" stroke="#7a6ae0" stroke-opacity="0.6" stroke-width="0.8"/><ellipse cx="69" cy="40" rx="33.3" ry="12.9" fill="none" stroke="#7a6ae0" stroke-opacity="0.9" stroke-width="1.4"/><ellipse cx="69" cy="40" rx="24.3" ry="9.5" fill="none" stroke="#7a6ae0" stroke-opacity="0.7" stroke-width="1.2"/><ellipse cx="69" cy="40" rx="14.4" ry="5.6" fill="none" stroke="#7a6ae0" stroke-opacity="0.6" stroke-width="1"/><ellipse cx="33.5" cy="36.5" rx="3.5" ry="4.5" transform="rotate(0 33.5 36.5)" fill="#c8bcff"/><ellipse cx="42" cy="31.5" rx="2.5" ry="2.5" transform="rotate(0 42 31.5)" fill="#dcd4ff"/><ellipse cx="60" cy="35" rx="7" ry="3" transform="rotate(0 60 35)" fill="#ded6ff"/><ellipse cx="81" cy="44" rx="9" ry="5" transform="rotate(-20 81 44)" fill="#f4f0ff"/><ellipse cx="93.5" cy="38" rx="2.5" ry="3.5" transform="rotate(0 93.5 38)" fill="#c8c0ff"/><ellipse cx="86" cy="56.5" rx="5" ry="2" transform="rotate(0 86 56.5)" fill="#a89cf0"/><ellipse cx="50" cy="42" rx="4" ry="2" transform="rotate(0 50 42)" fill="#9a8ce8"/></g></svg></div>
<div class="lbl" style="left:650.5px;top:363px">1.gif</div>
<div class="lbl" style="left:817.5px;top:363px">2.gif</div>
<div class="lbl" style="left:984.5px;top:363px">3.gif</div>
<div class="lbl" style="left:316.5px;top:487px">4.gif</div>
<div class="lbl" style="left:483.5px;top:487px">5.gif</div>
<div class="lbl" style="left:650.5px;top:487px">6.gif</div>
<div class="lbl" style="left:817.5px;top:487px">7.gif</div>
<div class="lbl" style="left:984.5px;top:487px">8.gif</div>
<div class="lbl" style="left:316.5px;top:671px">9.gif</div>
<div class="lbl" style="left:483.5px;top:671px">10.gif</div>
<div class="lbl" style="left:984.5px;top:671px">ripple.gif</div>
<div class="lbl" style="left:650.5px;top:671px">batch_converter.p<br>y</div>
<div class="lbl" style="left:817.5px;top:671px">converter_ripple.p<br>y</div>
<svg style="left:676px;top:523px" width="109" height="146" viewBox="0 0 109 146"><defs><linearGradient id="pdg" x1="0" y1="0" x2="0.3" y2="1"><stop offset="0" stop-color="#fbfbfb"/><stop offset="1" stop-color="#eff1f4"/></linearGradient><linearGradient id="pfg" x1="0" y1="0" x2="1" y2="1"><stop offset="0" stop-color="#f4f4f4"/><stop offset="1" stop-color="#d8d8d8"/></linearGradient></defs>
<path d="M0.5 0.5 H76.5 L107.5 31.5 V145 H0.5Z" fill="url(#pdg)" stroke="#c6c6c6" stroke-width="1"/>
<path d="M76.5 0.5 V31.5 H107.5Z" fill="url(#pfg)" stroke="#c6c6c6" stroke-width="1"/>
<path transform="translate(21.5,41) scale(2.67)" d="M14.25.18l.9.2.73.26.59.3.45.32.34.34.25.34.16.33.1.3.04.26.02.2-.01.13V8.5l-.05.63-.13.55-.21.46-.26.38-.3.31-.33.25-.35.19-.35.14-.33.1-.3.07-.26.04-.21.02H8.77l-.69.05-.59.14-.5.22-.41.27-.33.32-.27.35-.2.36-.15.37-.1.35-.07.32-.04.27-.02.21v3.06H3.17l-.21-.03-.28-.07-.32-.12-.35-.18-.36-.26-.36-.36-.35-.46-.32-.59-.28-.73-.21-.88-.14-1.05-.05-1.23.06-1.22.16-1.04.24-.87.32-.71.36-.57.4-.44.42-.33.42-.24.4-.16.36-.1.32-.05.24-.01h.16l.06.01h8.16v-.83H6.18l-.01-2.75-.02-.37.05-.34.11-.31.17-.28.25-.26.31-.23.38-.2.44-.18.51-.15.58-.12.64-.1.71-.06.77-.04.84-.02 1.27.05zm-6.3 1.98l-.23.33-.08.41.08.41.23.34.33.22.41.09.41-.09.33-.22.23-.34.08-.41-.08-.41-.23-.33-.33-.22-.41-.09-.41.09zm13.09 3.95l.28.06.32.12.35.18.36.27.36.35.35.47.32.59.28.73.21.88.14 1.04.05 1.23-.06 1.23-.16 1.04-.24.86-.32.71-.36.57-.4.45-.42.33-.42.24-.4.16-.36.09-.32.05-.24.02-.16-.01h-8.22v.82h5.84l.01 2.76.02.36-.05.34-.11.31-.17.29-.25.25-.31.24-.38.2-.44.17-.51.15-.58.13-.64.09-.71.07-.77.04-.84.01-1.27-.04-1.07-.14-.9-.2-.73-.25-.59-.3-.45-.33-.34-.34-.25-.34-.16-.33-.1-.3-.04-.25-.02-.2.01-.13v-5.34l.05-.64.13-.54.21-.46.26-.38.3-.32.33-.24.35-.2.35-.14.33-.1.3-.06.26-.04.21-.02.13-.01h5.84l.69-.05.59-.14.5-.21.41-.28.33-.32.27-.35.2-.36.15-.36.1-.35.07-.32.04-.28.02-.21V6.07h2.09l.14.01zm-6.47 14.25l-.23.33-.08.41.08.41.23.33.33.23.41.08.41-.08.33-.23.23-.33.08-.41-.08-.41-.23-.33-.33-.23-.41-.08-.41.08z" fill="#4a87a8"/>
<g stroke-linejoin="round"><path d="M92.5 110.8 L93.8 118.3 L75.2 132.2 Q73.8 133 72.6 131.8 L72 131 Q71.6 129.8 72.6 129Z" fill="#0a6fbc" stroke="#0a6fbc" stroke-width="0.8"/><path d="M75.2 117.6 L93.8 131 L92.6 139.3 L72.6 122.4 Q71.6 121.4 72.2 120.4 L72.8 119.2 Q74 117.2 75.2 117.6Z" fill="#0288d8" stroke="#0288d8" stroke-width="0.8"/><path d="M92.6 110.8 L99.4 114 Q101 115 101 117 V132.5 Q101 134.5 99.4 135.5 L92.6 139.3Z" fill="#22a6f0"/></g></svg>
<svg style="left:843px;top:523px" width="109" height="146" viewBox="0 0 109 146"><defs><linearGradient id="pdg" x1="0" y1="0" x2="0.3" y2="1"><stop offset="0" stop-color="#fbfbfb"/><stop offset="1" stop-color="#eff1f4"/></linearGradient><linearGradient id="pfg" x1="0" y1="0" x2="1" y2="1"><stop offset="0" stop-color="#f4f4f4"/><stop offset="1" stop-color="#d8d8d8"/></linearGradient></defs>
<path d="M0.5 0.5 H76.5 L107.5 31.5 V145 H0.5Z" fill="url(#pdg)" stroke="#c6c6c6" stroke-width="1"/>
<path d="M76.5 0.5 V31.5 H107.5Z" fill="url(#pfg)" stroke="#c6c6c6" stroke-width="1"/>
<path transform="translate(21.5,41) scale(2.67)" d="M14.25.18l.9.2.73.26.59.3.45.32.34.34.25.34.16.33.1.3.04.26.02.2-.01.13V8.5l-.05.63-.13.55-.21.46-.26.38-.3.31-.33.25-.35.19-.35.14-.33.1-.3.07-.26.04-.21.02H8.77l-.69.05-.59.14-.5.22-.41.27-.33.32-.27.35-.2.36-.15.37-.1.35-.07.32-.04.27-.02.21v3.06H3.17l-.21-.03-.28-.07-.32-.12-.35-.18-.36-.26-.36-.36-.35-.46-.32-.59-.28-.73-.21-.88-.14-1.05-.05-1.23.06-1.22.16-1.04.24-.87.32-.71.36-.57.4-.44.42-.33.42-.24.4-.16.36-.1.32-.05.24-.01h.16l.06.01h8.16v-.83H6.18l-.01-2.75-.02-.37.05-.34.11-.31.17-.28.25-.26.31-.23.38-.2.44-.18.51-.15.58-.12.64-.1.71-.06.77-.04.84-.02 1.27.05zm-6.3 1.98l-.23.33-.08.41.08.41.23.34.33.22.41.09.41-.09.33-.22.23-.34.08-.41-.08-.41-.23-.33-.33-.22-.41-.09-.41.09zm13.09 3.95l.28.06.32.12.35.18.36.27.36.35.35.47.32.59.28.73.21.88.14 1.04.05 1.23-.06 1.23-.16 1.04-.24.86-.32.71-.36.57-.4.45-.42.33-.42.24-.4.16-.36.09-.32.05-.24.02-.16-.01h-8.22v.82h5.84l.01 2.76.02.36-.05.34-.11.31-.17.29-.25.25-.31.24-.38.2-.44.17-.51.15-.58.13-.64.09-.71.07-.77.04-.84.01-1.27-.04-1.07-.14-.9-.2-.73-.25-.59-.3-.45-.33-.34-.34-.25-.34-.16-.33-.1-.3-.04-.25-.02-.2.01-.13v-5.34l.05-.64.13-.54.21-.46.26-.38.3-.32.33-.24.35-.2.35-.14.33-.1.3-.06.26-.04.21-.02.13-.01h5.84l.69-.05.59-.14.5-.21.41-.28.33-.32.27-.35.2-.36.15-.36.1-.35.07-.32.04-.28.02-.21V6.07h2.09l.14.01zm-6.47 14.25l-.23.33-.08.41.08.41.23.33.33.23.41.08.41-.08.33-.23.23-.33.08-.41-.08-.41-.23-.33-.33-.23-.41-.08-.41.08z" fill="#4a87a8"/>
<g stroke-linejoin="round"><path d="M92.5 110.8 L93.8 118.3 L75.2 132.2 Q73.8 133 72.6 131.8 L72 131 Q71.6 129.8 72.6 129Z" fill="#0a6fbc" stroke="#0a6fbc" stroke-width="0.8"/><path d="M75.2 117.6 L93.8 131 L92.6 139.3 L72.6 122.4 Q71.6 121.4 72.2 120.4 L72.8 119.2 Q74 117.2 75.2 117.6Z" fill="#0288d8" stroke="#0288d8" stroke-width="0.8"/><path d="M92.6 110.8 L99.4 114 Q101 115 101 117 V132.5 Q101 134.5 99.4 135.5 L92.6 139.3Z" fill="#22a6f0"/></g></svg>
<svg style="left:323px;top:796px" width="146" height="80" viewBox="0 0 146 80"><defs><linearGradient id="fs1" x1="0" y1="0" x2="1" y2="0"><stop offset="0" stop-color="#6a6a6a"/><stop offset="0.15" stop-color="#8c8c8c"/><stop offset="0.85" stop-color="#8c8c8c"/><stop offset="1" stop-color="#6a6a6a"/></linearGradient><radialGradient id="rg2" cx="0.5" cy="0.5" r="0.5"><stop offset="0" stop-color="#8070d8" stop-opacity="0.6"/><stop offset="1" stop-color="#000" stop-opacity="0"/></radialGradient><filter id="bl2"><feGaussianBlur stdDeviation="1.5"/></filter></defs>
<rect x="0" y="0" width="146" height="79" rx="3" fill="#4a4a4a"/>
<rect x="0.5" y="0.5" width="16" height="78" rx="2" fill="url(#fs1)"/><rect x="129" y="0.5" width="16.5" height="78" rx="2" fill="url(#fs1)"/>
<rect x="16.5" y="2" width="112.5" height="75" fill="#202020"/><rect x="18" y="4" width="109.5" height="71" rx="2" fill="#000"/>
<g fill="#fff"><rect x="4.5" y="4" width="9" height="7" rx="1.5"/><rect x="4.5" y="20" width="9" height="7" rx="1.5"/><rect x="4.5" y="36" width="9" height="7" rx="1.5"/><rect x="4.5" y="51.5" width="9" height="7" rx="1.5"/><rect x="4.5" y="67" width="9" height="7" rx="1.5"/>
<rect x="132.5" y="4" width="9" height="7" rx="1.5"/><rect x="132.5" y="20" width="9" height="7" rx="1.5"/><rect x="132.5" y="36" width="9" height="7" rx="1.5"/><rect x="132.5" y="51.5" width="9" height="7" rx="1.5"/><rect x="132.5" y="67" width="9" height="7" rx="1.5"/></g>
<defs><radialGradient id="rgr2" cx="0.5" cy="0.5" r="0.5"><stop offset="0" stop-color="#6a5ad0" stop-opacity="0.5"/><stop offset="0.8" stop-color="#2a2080" stop-opacity="0.3"/><stop offset="1" stop-color="#000" stop-opacity="0"/></radialGradient><filter id="blr2" x="-20%" y="-40%" width="140%" height="180%"><feGaussianBlur stdDeviation="1.1"/></filter></defs><ellipse cx="71.5" cy="40.6" rx="51.0" ry="19.4" fill="url(#rgr2)"/><g filter="url(#blr2)"><ellipse cx="71.5" cy="40.6" rx="49.0" ry="18.5" fill="none" stroke="#7a6ae0" stroke-opacity="0.8" stroke-width="1.0"/><ellipse cx="71.5" cy="40.6" rx="43.1" ry="16.3" fill="none" stroke="#7a6ae0" stroke-opacity="0.6" stroke-width="0.8"/><ellipse cx="71.5" cy="40.6" rx="36.3" ry="13.7" fill="none" stroke="#7a6ae0" stroke-opacity="0.9" stroke-width="1.4"/><ellipse cx="71.5" cy="40.6" rx="26.5" ry="10.0" fill="none" stroke="#7a6ae0" stroke-opacity="0.7" stroke-width="1.2"/><ellipse cx="71.5" cy="40.6" rx="15.7" ry="5.9" fill="none" stroke="#7a6ae0" stroke-opacity="0.6" stroke-width="1"/><ellipse cx="25" cy="38.5" rx="2.8" ry="5" transform="rotate(0 25 38.5)" fill="#c8bcff"/><ellipse cx="30.5" cy="30.5" rx="3" ry="2.5" transform="rotate(0 30.5 30.5)" fill="#dcd4ff"/><ellipse cx="43" cy="35.5" rx="4" ry="3" transform="rotate(0 43 35.5)" fill="#d8d0ff"/><ellipse cx="69" cy="31.5" rx="3.5" ry="2.5" transform="rotate(0 69 31.5)" fill="#e0d8ff"/><ellipse cx="77" cy="38.5" rx="4" ry="3" transform="rotate(0 77 38.5)" fill="#d8d0ff"/><ellipse cx="89" cy="49" rx="12" ry="5" transform="rotate(-25 89 49)" fill="#f4f0ff"/><ellipse cx="105.5" cy="40" rx="2.5" ry="3.5" transform="rotate(0 105.5 40)" fill="#c8c0ff"/><ellipse cx="62" cy="48" rx="5" ry="2" transform="rotate(0 62 48)" fill="#a89cf0"/><ellipse cx="53" cy="38" rx="6" ry="2.5" transform="rotate(10 53 38)" fill="#9a8ce8"/></g></svg>
<svg style="left:507px;top:736px" width="112" height="138" viewBox="0 0 112 138"><path d="M14 2.5 H79 Q83 2.5 86 5.5 L106.5 25 Q109.5 28 109.5 32 V123 Q109.5 135 97.5 135 H14 Q2.5 135 2.5 123 V14 Q2.5 2.5 14 2.5Z" fill="#001e36" stroke="#31a8ff" stroke-width="4.5" stroke-linejoin="round"/>
<text x="26" y="75" font-family="Liberation Sans" font-weight="bold" font-size="65.5" fill="#31a8ff" textLength="62" lengthAdjust="spacingAndGlyphs">Ps</text>
<text x="34" y="117" font-family="Liberation Sans" font-size="27" fill="#fff" stroke="#fff" stroke-width="0.6" textLength="45" lengthAdjust="spacingAndGlyphs">PSD</text></svg>
<div class="lbl" style="left:316.5px;top:880px">ripple.mp4</div>
<div class="lbl" style="left:483.5px;top:880px">Untitled-2.psd</div>
<!-- sidebar -->
<div class="a" style="left:0;top:211px;width:263px;height:48px;background:#d9d9d9;border:1px solid #8c8c8c;border-left:none"></div>
<svg style="left:47px;top:224px" width="25" height="24" viewBox="0 0 25 24"><defs><linearGradient id="hg" x1="0" y1="0" x2="0" y2="1"><stop offset="0" stop-color="#e2e2e2"/><stop offset="1" stop-color="#a4a4a4"/></linearGradient></defs><path d="M1.5 11 L12.2 2.5 L23 11 V21.5 Q23 23 21.5 23 H16.3 V14 H7.5 V23 H3 Q1.5 23 1.5 21.5Z" fill="url(#hg)"/><path d="M1.8 11.8 L12.2 1.8 L22.8 11.8" fill="none" stroke="#e4700c" stroke-width="3" stroke-linecap="round" stroke-linejoin="round"/></svg>
<div class="t" style="left:76px;top:224px">Home</div>
<svg style="left:47px;top:271px" width="25" height="24" viewBox="0 0 25 24"><defs><linearGradient id="gg" x1="0" y1="0" x2="1" y2="1"><stop offset="0" stop-color="#1e9ae6"/><stop offset="1" stop-color="#0a62c4"/></linearGradient><linearGradient id="gm" x1="0" y1="0" x2="0" y2="1"><stop offset="0" stop-color="#ffffff"/><stop offset="1" stop-color="#c8e2fa"/></linearGradient><linearGradient id="gr" x1="0" y1="0" x2="0" y2="1"><stop offset="0" stop-color="#0a6ad0"/><stop offset="1" stop-color="#0848a8"/></linearGradient></defs><rect x="0" y="0" width="20.2" height="19.2" rx="1.6" fill="url(#gg)"/><path d="M1.2 19.6 L9.2 11.2 Q10.4 10 11.6 11.2 L19.6 19.6Z" fill="url(#gm)"/><circle cx="14.5" cy="5.4" r="1.7" fill="#fff"/><path d="M22.1 2.3 L23.5 3.6 Q24.2 4.2 24.2 5 V21.5 L22.1 21.5Z" fill="url(#gr)"/><path d="M3.3 21.2 H24.2 Q24 23 22.4 23.2 H5.4 Q4 23.2 3.3 21.8Z" fill="#5898d8"/></svg>
<div class="t" style="left:76px;top:272px">Gallery</div>
<svg style="left:18px;top:325px" width="8" height="13" viewBox="0 0 8 13"><path d="M1 1 L6.8 6.5 L1 12" fill="none" stroke="#8a8a8a" stroke-width="1.4"/></svg>
<svg style="left:47px;top:322px" width="25" height="17" viewBox="0 0 25 17"><defs><linearGradient id="og1" x1="0" y1="0" x2="0.4" y2="1"><stop offset="0" stop-color="#2aa4f4"/><stop offset="1" stop-color="#1060e0"/></linearGradient><linearGradient id="og2" x1="0" y1="0" x2="0" y2="1"><stop offset="0" stop-color="#28d4f4"/><stop offset="1" stop-color="#0688f0"/></linearGradient></defs><path d="M5.5 16.6 Q0.2 16.6 0.2 11 Q0.2 4.6 5.6 3 Q8 0.2 12.6 0.2 Q18 0.2 20.4 5.6 Q24.4 7 24.4 11.2 Q24.4 16.6 19.6 16.6Z" fill="url(#og1)"/><path d="M0.4 13.5 Q-0.5 5 5.6 3 L8.8 2.6 Q5.5 6 3.6 12Z" fill="#0b3ec4" opacity="0.85"/><path d="M9.6 16.6 Q11.5 10.5 14 8 Q16.8 5.4 20.4 5.6 Q24.4 7 24.4 11.2 Q24.4 16.6 19.6 16.6Z" fill="url(#og2)"/></svg>
<div class="t" style="left:76px;top:320px">Shengtao - Personal</div>
<div class="a" style="left:12px;top:378px;width:240px;height:2px;background:#d4d4d4"></div>
<svg style="left:47px;top:418px" width="24" height="18" viewBox="0 0 24 18"><defs><linearGradient id="dg" x1="0" y1="0" x2="0.6" y2="1"><stop offset="0" stop-color="#33c9e0"/><stop offset="1" stop-color="#1173bd"/></linearGradient></defs><rect width="24" height="18" rx="1.8" fill="url(#dg)"/><rect x="2.5" y="2" width="2" height="2" fill="#e8f7fb"/><rect x="2.5" y="6" width="2" height="2" fill="#e8f7fb"/><path d="M0.5 17.3 H23.5" stroke="#0e4f8f" stroke-width="1.2"/></svg>
<div class="t" style="left:76px;top:416px">Desktop</div><svg style="left:243px;top:419px" width="16" height="16" viewBox="0 0 16 16"><path transform="translate(5.2,11.2) rotate(45)" d="M-3.6 -10.6 Q-4.2 -10.6 -4.2 -10 L-3.2 -4.2 L-5.2 -1.2 Q-5.4 0.6 -4.6 0.6 H-0.8 V5.8 Q0 6.8 0.8 5.8 V0.6 H4.6 Q5.4 0.6 5.2 -1.2 L3.2 -4.2 L4.2 -10 Q4.2 -10.6 3.6 -10.6Z" fill="#929da5"/></svg>
<svg style="left:51px;top:464px" width="16" height="23" viewBox="0 0 16 23"><path d="M8 0.5 V16.5 M1.5 10.3 L8 16.5 L14.5 10.3" fill="none" stroke="#1fb58a" stroke-width="1.5"/><path d="M0 22 H16" stroke="#21c08f" stroke-width="1.6"/></svg>
<div class="t" style="left:76px;top:464px">Downloads</div><svg style="left:243px;top:467px" width="16" height="16" viewBox="0 0 16 16"><path transform="translate(5.2,11.2) rotate(45)" d="M-3.6 -10.6 Q-4.2 -10.6 -4.2 -10 L-3.2 -4.2 L-5.2 -1.2 Q-5.4 0.6 -4.6 0.6 H-0.8 V5.8 Q0 6.8 0.8 5.8 V0.6 H4.6 Q5.4 0.6 5.2 -1.2 L3.2 -4.2 L4.2 -10 Q4.2 -10.6 3.6 -10.6Z" fill="#929da5"/></svg>
<svg style="left:50px;top:511px" width="18" height="24" viewBox="0 0 18 24"><defs><linearGradient id="docg" x1="0" y1="0" x2="0.5" y2="1"><stop offset="0" stop-color="#adbdd0"/><stop offset="1" stop-color="#7a93ad"/></linearGradient></defs><rect width="18" height="24" rx="1.8" fill="url(#docg)"/><path d="M3 7.5 H9 M3 10.5 H9 M3 13.5 H15 M3 16.5 H15" stroke="#f4f7fa" stroke-width="1.2"/><rect x="11" y="6" width="4" height="3.5" fill="#f4f7fa"/></svg>
<div class="t" style="left:76px;top:512px">Documents</div><svg style="left:243px;top:515px" width="16" height="16" viewBox="0 0 16 16"><path transform="translate(5.2,11.2) rotate(45)" d="M-3.6 -10.6 Q-4.2 -10.6 -4.2 -10 L-3.2 -4.2 L-5.2 -1.2 Q-5.4 0.6 -4.6 0.6 H-0.8 V5.8 Q0 6.8 0.8 5.8 V0.6 H4.6 Q5.4 0.6 5.2 -1.2 L3.2 -4.2 L4.2 -10 Q4.2 -10.6 3.6 -10.6Z" fill="#929da5"/></svg>
<svg style="left:48px;top:560px" width="22" height="22" viewBox="0 0 22 22"><defs><linearGradient id="pg" x1="0" y1="0" x2="1" y2="1"><stop offset="0" stop-color="#2aa5ec"/><stop offset="1" stop-color="#0c5fbf"/></linearGradient></defs><rect width="22" height="22" rx="2" fill="url(#pg)"/><path d="M1.2 21 L11 11.5 L20.8 21Z" fill="#e9f4fd"/><circle cx="16.5" cy="5.5" r="1.8" fill="#fff"/></svg>
<div class="t" style="left:76px;top:560px">Pictures</div><svg style="left:243px;top:563px" width="16" height="16" viewBox="0 0 16 16"><path transform="translate(5.2,11.2) rotate(45)" d="M-3.6 -10.6 Q-4.2 -10.6 -4.2 -10 L-3.2 -4.2 L-5.2 -1.2 Q-5.4 0.6 -4.6 0.6 H-0.8 V5.8 Q0 6.8 0.8 5.8 V0.6 H4.6 Q5.4 0.6 5.2 -1.2 L3.2 -4.2 L4.2 -10 Q4.2 -10.6 3.6 -10.6Z" fill="#929da5"/></svg>
<svg style="left:47px;top:607px" width="24" height="24" viewBox="0 0 24 24"><defs><linearGradient id="mg" x1="0" y1="0" x2="0.8" y2="1"><stop offset="0" stop-color="#f48a4a"/><stop offset="1" stop-color="#b56a9b"/></linearGradient></defs><circle cx="12" cy="12" r="12" fill="url(#mg)"/><path d="M12.6 5.2 V16.5" stroke="#fff" stroke-width="2"/><ellipse cx="9.6" cy="16.8" rx="3.3" ry="2.9" fill="#fff"/><path d="M11.8 4.4 L17.6 5.4 Q18 5.6 18 6 V8.6 L11.8 8.2Z" fill="#f4f4f4"/></svg>
<div class="t" style="left:76px;top:608px">Music</div><svg style="left:243px;top:611px" width="16" height="16" viewBox="0 0 16 16"><path transform="translate(5.2,11.2) rotate(45)" d="M-3.6 -10.6 Q-4.2 -10.6 -4.2 -10 L-3.2 -4.2 L-5.2 -1.2 Q-5.4 0.6 -4.6 0.6 H-0.8 V5.8 Q0 6.8 0.8 5.8 V0.6 H4.6 Q5.4 0.6 5.2 -1.2 L3.2 -4.2 L4.2 -10 Q4.2 -10.6 3.6 -10.6Z" fill="#929da5"/></svg>
<svg style="left:49px;top:655px" width="20" height="24" viewBox="0 0 20 24"><defs><linearGradient id="vg" x1="0" y1="0" x2="0.4" y2="1"><stop offset="0" stop-color="#b070f4"/><stop offset="1" stop-color="#7a40e4"/></linearGradient></defs><rect width="20" height="24" rx="1.8" fill="url(#vg)"/><g fill="#3a1670"><rect x="1.5" y="3" width="2.5" height="2.5"/><rect x="1.5" y="8" width="2.5" height="2.5"/><rect x="1.5" y="13" width="2.5" height="2.5"/><rect x="1.5" y="18" width="2.5" height="2.5"/><rect x="16" y="3" width="2.5" height="2.5"/><rect x="16" y="8" width="2.5" height="2.5"/><rect x="16" y="13" width="2.5" height="2.5"/><rect x="16" y="18" width="2.5" height="2.5"/></g><path d="M7 7.5 L14.5 12 L7 16.5Z" fill="#e9e3f5"/></svg>
<div class="t" style="left:76px;top:656px">Videos</div><svg style="left:243px;top:659px" width="16" height="16" viewBox="0 0 16 16"><path transform="translate(5.2,11.2) rotate(45)" d="M-3.6 -10.6 Q-4.2 -10.6 -4.2 -10 L-3.2 -4.2 L-5.2 -1.2 Q-5.4 0.6 -4.6 0.6 H-0.8 V5.8 Q0 6.8 0.8 5.8 V0.6 H4.6 Q5.4 0.6 5.2 -1.2 L3.2 -4.2 L4.2 -10 Q4.2 -10.6 3.6 -10.6Z" fill="#929da5"/></svg>
<svg style="left:48px;top:706px" width="23" height="17" viewBox="0 0 23 17"><defs><linearGradient id="fs" x1="0" y1="0" x2="0.4" y2="1"><stop offset="0" stop-color="#ffe38a"/><stop offset="1" stop-color="#f9c941"/></linearGradient></defs><path d="M0 1 Q0 0 1 0 H7.5 L9.5 1.8 H22 Q23 1.8 23 2.8 V16 Q23 17 22 17 H1 Q0 17 0 16Z" fill="#f0ae1e"/><path d="M0 4 Q0 3.3 0.8 3.3 H22.2 Q23 3.3 23 4 V16 Q23 17 22 17 H1 Q0 17 0 16Z" fill="url(#fs)"/><path d="M0.3 16.4 H22.7" stroke="#e4a11a" stroke-width="1"/></svg>
<div class="t" style="left:76px;top:704px">New folder (2)</div><svg style="left:243px;top:707px" width="16" height="16" viewBox="0 0 16 16"><path transform="translate(5.2,11.2) rotate(45)" d="M-3.6 -10.6 Q-4.2 -10.6 -4.2 -10 L-3.2 -4.2 L-5.2 -1.2 Q-5.4 0.6 -4.6 0.6 H-0.8 V5.8 Q0 6.8 0.8 5.8 V0.6 H4.6 Q5.4 0.6 5.2 -1.2 L3.2 -4.2 L4.2 -10 Q4.2 -10.6 3.6 -10.6Z" fill="#929da5"/></svg>
<svg style="left:48px;top:754px" width="23" height="17" viewBox="0 0 23 17"><defs><linearGradient id="fs" x1="0" y1="0" x2="0.4" y2="1"><stop offset="0" stop-color="#ffe38a"/><stop offset="1" stop-color="#f9c941"/></linearGradient></defs><path d="M0 1 Q0 0 1 0 H7.5 L9.5 1.8 H22 Q23 1.8 23 2.8 V16 Q23 17 22 17 H1 Q0 17 0 16Z" fill="#f0ae1e"/><path d="M0 4 Q0 3.3 0.8 3.3 H22.2 Q23 3.3 23 4 V16 Q23 17 22 17 H1 Q0 17 0 16Z" fill="url(#fs)"/><path d="M0.3 16.4 H22.7" stroke="#e4a11a" stroke-width="1"/></svg>
<div class="t" style="left:76px;top:752px">final</div><svg style="left:243px;top:755px" width="16" height="16" viewBox="0 0 16 16"><path transform="translate(5.2,11.2) rotate(45)" d="M-3.6 -10.6 Q-4.2 -10.6 -4.2 -10 L-3.2 -4.2 L-5.2 -1.2 Q-5.4 0.6 -4.6 0.6 H-0.8 V5.8 Q0 6.8 0.8 5.8 V0.6 H4.6 Q5.4 0.6 5.2 -1.2 L3.2 -4.2 L4.2 -10 Q4.2 -10.6 3.6 -10.6Z" fill="#929da5"/></svg>
<svg style="left:48px;top:802px" width="23" height="17" viewBox="0 0 23 17"><defs><linearGradient id="fs" x1="0" y1="0" x2="0.4" y2="1"><stop offset="0" stop-color="#ffe38a"/><stop offset="1" stop-color="#f9c941"/></linearGradient></defs><path d="M0 1 Q0 0 1 0 H7.5 L9.5 1.8 H22 Q23 1.8 23 2.8 V16 Q23 17 22 17 H1 Q0 17 0 16Z" fill="#f0ae1e"/><path d="M0 4 Q0 3.3 0.8 3.3 H22.2 Q23 3.3 23 4 V16 Q23 17 22 17 H1 Q0 17 0 16Z" fill="url(#fs)"/><path d="M0.3 16.4 H22.7" stroke="#e4a11a" stroke-width="1"/></svg>
<div class="t" style="left:76px;top:800px">Photo</div><svg style="left:243px;top:803px" width="16" height="16" viewBox="0 0 16 16"><path transform="translate(5.2,11.2) rotate(45)" d="M-3.6 -10.6 Q-4.2 -10.6 -4.2 -10 L-3.2 -4.2 L-5.2 -1.2 Q-5.4 0.6 -4.6 0.6 H-0.8 V5.8 Q0 6.8 0.8 5.8 V0.6 H4.6 Q5.4 0.6 5.2 -1.2 L3.2 -4.2 L4.2 -10 Q4.2 -10.6 3.6 -10.6Z" fill="#929da5"/></svg>
<svg style="left:48px;top:850px" width="23" height="17" viewBox="0 0 23 17"><defs><linearGradient id="fs" x1="0" y1="0" x2="0.4" y2="1"><stop offset="0" stop-color="#ffe38a"/><stop offset="1" stop-color="#f9c941"/></linearGradient></defs><path d="M0 1 Q0 0 1 0 H7.5 L9.5 1.8 H22 Q23 1.8 23 2.8 V16 Q23 17 22 17 H1 Q0 17 0 16Z" fill="#f0ae1e"/><path d="M0 4 Q0 3.3 0.8 3.3 H22.2 Q23 3.3 23 4 V16 Q23 17 22 17 H1 Q0 17 0 16Z" fill="url(#fs)"/><path d="M0.3 16.4 H22.7" stroke="#e4a11a" stroke-width="1"/></svg>
<div class="t" style="left:76px;top:848px">New folder</div><svg style="left:243px;top:851px" width="16" height="16" viewBox="0 0 16 16"><path transform="translate(5.2,11.2) rotate(45)" d="M-3.6 -10.6 Q-4.2 -10.6 -4.2 -10 L-3.2 -4.2 L-5.2 -1.2 Q-5.4 0.6 -4.6 0.6 H-0.8 V5.8 Q0 6.8 0.8 5.8 V0.6 H4.6 Q5.4 0.6 5.2 -1.2 L3.2 -4.2 L4.2 -10 Q4.2 -10.6 3.6 -10.6Z" fill="#929da5"/></svg>
<div class="a" style="left:12px;top:906px;width:240px;height:2px;background:#d4d4d4"></div>
<svg style="left:15px;top:951px" width="14" height="8" viewBox="0 0 14 8"><path d="M0.8 0.8 L7 7 L13.2 0.8" fill="none" stroke="#1a1a1a" stroke-width="1.4"/></svg>
<svg style="left:47px;top:944px" width="24" height="23" viewBox="0 0 24 23"><g fill="#0061fe"><path d="M5.9 0 L11.6 3.7 L5.9 7.6 L0.1 3.7Z"/><path d="M18 0 L23.8 3.7 L18 7.6 L12.3 3.7Z"/><path d="M5.9 8.8 L11.6 12.4 L5.9 16 L0.1 12.4Z"/><path d="M18 8.8 L23.8 12.4 L18 16 L12.3 12.4Z"/><path d="M12 14.5 L17.8 18.3 L12 22.1 L6.2 18.3Z"/></g></svg>
<div class="t" style="left:76px;top:944px">MIT Dropbox</div>
<svg style="left:30px;top:997px" width="8" height="13" viewBox="0 0 8 13"><path d="M1 1 L6.8 6.5 L1 12" fill="none" stroke="#8a8a8a" stroke-width="1.4"/></svg>
<svg style="left:60px;top:994px" width="23" height="17" viewBox="0 0 23 17"><defs><linearGradient id="fs" x1="0" y1="0" x2="0.4" y2="1"><stop offset="0" stop-color="#ffe38a"/><stop offset="1" stop-color="#f9c941"/></linearGradient></defs><path d="M0 1 Q0 0 1 0 H7.5 L9.5 1.8 H22 Q23 1.8 23 2.8 V16 Q23 17 22 17 H1 Q0 17 0 16Z" fill="#f0ae1e"/><path d="M0 4 Q0 3.3 0.8 3.3 H22.2 Q23 3.3 23 4 V16 Q23 17 22 17 H1 Q0 17 0 16Z" fill="url(#fs)"/><path d="M0.3 16.4 H22.7" stroke="#e4a11a" stroke-width="1"/></svg>
<svg style="left:66px;top:998px" width="10" height="12" viewBox="0 0 10 12"><path d="M1 11.5 V2 Q1 0.5 2.5 0.5 H6 Q7.5 0.5 7.5 2 V4.5 H8.8 Q9.2 4.5 9.2 5 V11.5Z" fill="#b8860e"/><path d="M2.6 2.6 H5.8 M2.6 4.6 H5.8 M2.6 6.6 H7.6 M3.4 8.6 V11.5 M6 8.6 V11.5" stroke="#f6cf60" stroke-width="0.9"/></svg>
<div class="t" style="left:88px;top:992px;width:176px;overflow:hidden">4.645 - 1750s to Presents</div>
<svg style="left:30px;top:1045px" width="8" height="13" viewBox="0 0 8 13"><path d="M1 1 L6.8 6.5 L1 12" fill="none" stroke="#8a8a8a" stroke-width="1.4"/></svg>
<svg style="left:60px;top:1042px" width="23" height="17" viewBox="0 0 23 17"><defs><linearGradient id="fs" x1="0" y1="0" x2="0.4" y2="1"><stop offset="0" stop-color="#ffe38a"/><stop offset="1" stop-color="#f9c941"/></linearGradient></defs><path d="M0 1 Q0 0 1 0 H7.5 L9.5 1.8 H22 Q23 1.8 23 2.8 V16 Q23 17 22 17 H1 Q0 17 0 16Z" fill="#f0ae1e"/><path d="M0 4 Q0 3.3 0.8 3.3 H22.2 Q23 3.3 23 4 V16 Q23 17 22 17 H1 Q0 17 0 16Z" fill="url(#fs)"/><path d="M0.3 16.4 H22.7" stroke="#e4a11a" stroke-width="1"/></svg>
<svg style="left:65px;top:1046px" width="12" height="12" viewBox="0 0 12 12"><circle cx="6.3" cy="3.6" r="2.3" fill="#b8860e"/><path d="M2 6.8 H10.6 Q10.6 11.2 6.3 11.2 Q2 11.2 2 6.8Z" fill="#b8860e"/></svg>
<div class="t" style="left:88px;top:1040px">Shengtao Shen</div>
<div class="a" style="left:264px;top:202px;width:25px;height:868px;background:#f0f0f0"></div>
<div class="a" style="left:274px;top:228px;width:5px;height:603px;background:#868686;border-radius:3px"></div>
<div class="a" style="left:291px;top:202px;width:2px;height:868px;background:#f7f7f7"></div>
<div class="t" style="left:19px;top:1079px">17 items</div>
<div class="a" style="left:103px;top:1079px;width:1px;height:21px;background:#e6e6e6"></div>
<svg style="left:1075px;top:1079px" width="20" height="18" viewBox="0 0 20 18"><path d="M1 1.5 H19 M1 6.5 H19 M1 11.5 H19 M1 16.5 H19" stroke="#555" stroke-width="1.1"/></svg>
<svg style="left:1114px;top:1078px" width="20" height="20" viewBox="0 0 20 20"><rect x="1.5" y="1.5" width="17" height="13.5" rx="1.5" fill="none" stroke="#555" stroke-width="1.1"/><path d="M1 18.5 H19" stroke="#555" stroke-width="1.2"/></svg>
<svg style="left:1140px;top:1097px" width="10" height="10"><path d="M10 2 V10 H2Z" fill="#9a9a9a"/></svg>
</body></html>
